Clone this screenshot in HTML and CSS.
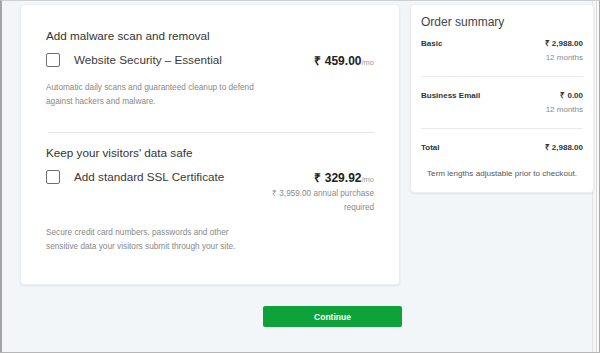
FILE: index.html
```html
<!DOCTYPE html>
<html lang="en">
<head>
    <meta charset="UTF-8">
    <meta name="viewport" content="width=device-width, initial-scale=1.0">
    <title>Checkout - Add-ons</title>
    <link rel="stylesheet" href="styles.css">
</head>
<body>

    <div class="frame">
        <div class="page">

            <div class="main-col">
                <div class="card addons">

                    <div class="addon">
                        <h3>Add malware scan and removal</h3>
                        <div class="addon-row">
                            <span class="checkbox"></span>
                            <span class="addon-name">Website Security &ndash; Essential</span>
                            <div class="addon-price">
                                <div class="price-line"><strong>₹ 459.00</strong><span class="per">/mo</span></div>
                            </div>
                        </div>
                        <p class="addon-desc">Automatic daily scans and guaranteed cleanup to defend<br>against hackers and malware.</p>
                    </div>

                    <hr class="divider">

                    <div class="addon">
                        <h3>Keep your visitors' data safe</h3>
                        <div class="addon-row">
                            <span class="checkbox"></span>
                            <span class="addon-name">Add standard SSL Certificate</span>
                            <div class="addon-price">
                                <div class="price-line"><strong>₹ 329.92</strong><span class="per">/mo</span></div>
                                <div class="price-note">₹ 3,959.00 annual purchase<br>required</div>
                            </div>
                        </div>
                        <p class="addon-desc second">Secure credit card numbers, passwords and other<br>sensitive data your visitors submit through your site.</p>
                    </div>

                </div>

                <button class="continue-btn">Continue</button>
            </div>

            <div class="card summary">
                <h2>Order summary</h2>

                <div class="summary-item">
                    <div class="summary-line">
                        <span class="label">Basic</span>
                        <span class="amount">₹ 2,988.00</span>
                    </div>
                    <div class="term">12 months</div>
                </div>

                <div class="summary-item">
                    <div class="summary-line">
                        <span class="label">Business Email</span>
                        <span class="amount">₹ 0.00</span>
                    </div>
                    <div class="term">12 months</div>
                </div>

                <div class="summary-item total">
                    <div class="summary-line">
                        <span class="label">Total</span>
                        <span class="amount">₹ 2,988.00</span>
                    </div>
                </div>

                <p class="summary-note">Term lengths adjustable prior to checkout.</p>
            </div>

        </div>
    </div>

</body>
</html>
```

FILE: styles.css
```css
/* Global styles */
body {
    font-family: 'Liberation Sans', Arial, sans-serif;
    background-color: #fff;
    margin: 0;
    padding: 0;
}

/* Outer window frame */
.frame {
    box-sizing: border-box;
    width: 600px;
    height: 353px;
    background-color: #f3f6f9;
    border-left: 2px solid #a4a4a4;
    border-top: 1px solid #cfcfcf;
    border-bottom: 1px solid #b8b8b8;
    border-right: 1px solid #a8a8a8;
    box-shadow: inset -2px 0 0 #fafafa, inset -3px 0 0 #dcdcdc, inset -6px 0 0 #f3f6f9, inset -7px 0 0 #e4e4e4;
    overflow: hidden;
}

.page {
    display: flex;
    align-items: flex-start;
    gap: 10px;
    padding: 3px 0 0 18px;
}

/* Cards */
.card {
    box-sizing: border-box;
    background-color: #fff;
    border: 1px solid #ebedf0;
    border-radius: 4px;
    box-shadow: 0 1px 2px rgba(0, 0, 0, 0.08);
}

.main-col {
    display: flex;
    flex-direction: column;
    width: 380px;
}

.addons {
    height: 281px;
    padding: 23px 25px 0 25px;
}

.addon h3 {
    margin: 0;
    font-size: 11.7px;
    line-height: 16px;
    font-weight: normal;
    color: #333;
}

.addon-row {
    display: flex;
    align-items: flex-start;
    margin-top: 9px;
}

.checkbox {
    box-sizing: border-box;
    width: 14px;
    height: 14px;
    border: 1.5px solid #6f6f6f;
    border-radius: 2px;
    flex-shrink: 0;
}

.addon-name {
    margin-left: 14px;
    font-size: 11.7px;
    line-height: 14px;
    color: #3a3a3a;
    flex: 1;
}

.addon-price {
    text-align: right;
}

.price-line {
    line-height: 14px;
}

.price-line strong {
    font-size: 12px;
    color: #222;
}

.per {
    font-size: 7.5px;
    color: #999;
}

.price-note {
    font-size: 8.2px;
    line-height: 13.5px;
    color: #8a8a8a;
}

.addon-desc {
    margin: 11px 0 0 0;
    font-size: 8.25px;
    line-height: 14px;
    color: #888;
}

.addon-desc.second {
    margin-top: 12px;
}

.divider {
    border: none;
    border-top: 1px solid #e6e6e6;
    margin: 23px 0 12px 2px;
}

/* Continue button */
.continue-btn {
    align-self: flex-end;
    width: 139px;
    height: 21px;
    margin: 21px -2px 0 0;
    font-family: inherit;
    font-size: 8.5px;
    font-weight: bold;
    background-color: #0ea23a;
    color: #fff;
    border: none;
    border-radius: 2px;
    cursor: pointer;
}

.continue-btn:hover {
    opacity: 0.9;
}

/* Order summary */
.summary {
    width: 184px;
    padding: 10px 10px 12px 10px;
}

.summary h2 {
    margin: 0 0 8px 0;
    font-size: 12px;
    line-height: 14px;
    font-weight: normal;
    color: #444;
}

.summary-item {
    padding: 12px 0 12px 0;
    border-bottom: 1px solid #eaeaea;
}

.summary-item:first-of-type {
    padding-top: 0;
}

.summary-item.total {
    padding: 12px 0 0 0;
    border-bottom: none;
}

.summary-line {
    display: flex;
    justify-content: space-between;
    font-size: 8px;
    line-height: 13.5px;
    font-weight: bold;
    color: #333;
}

.term {
    text-align: right;
    font-size: 8px;
    line-height: 13.5px;
    color: #8a8a8a;
}

.summary-note {
    margin: 13px 0 0 0;
    text-align: center;
    font-size: 8.1px;
    line-height: 12px;
    color: #555;
}
```
